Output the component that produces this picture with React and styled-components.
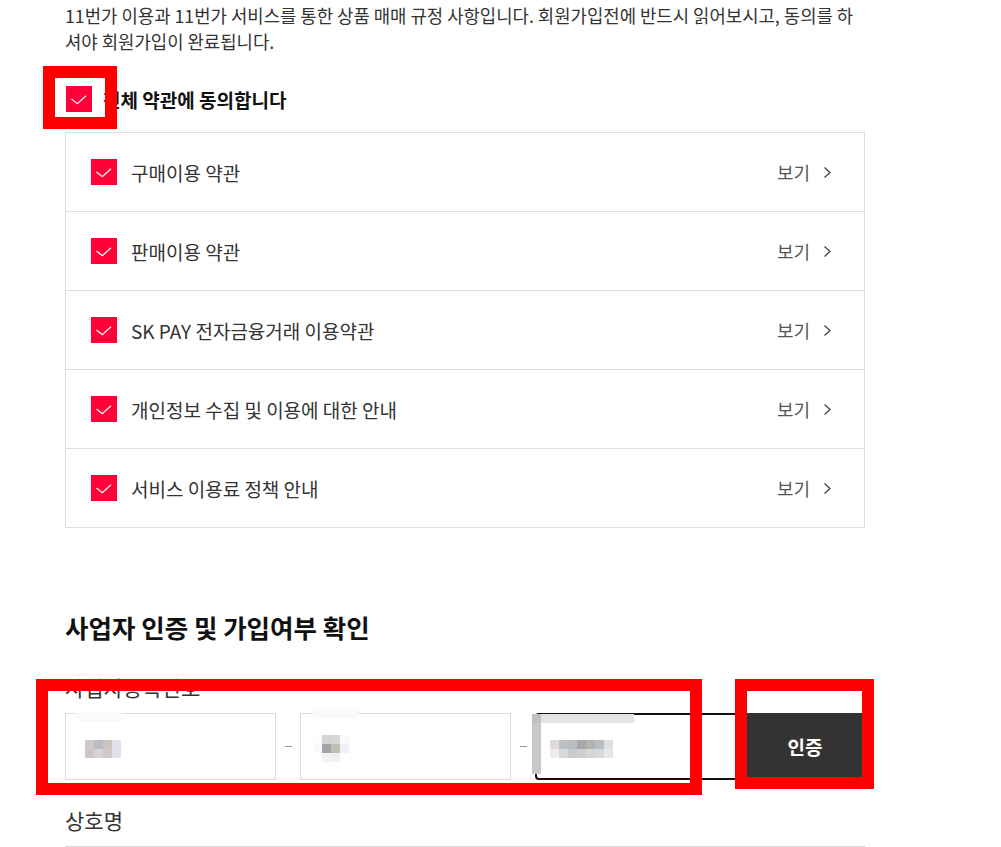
import React from "react";
import styled, { createGlobalStyle } from "styled-components";

const Global = createGlobalStyle`
  html, body { margin: 0; padding: 0; overflow: hidden; background: #fff; }
  body { font-family: "Noto Sans CJK KR", "Noto Sans", sans-serif; color: #333; }
  * { box-sizing: border-box; }
`;

const Page = styled.div`
  position: relative;
  width: 1001px;
  height: 847px;
  overflow: hidden;
  padding: 2px 0 0 65px;
`;

const Content = styled.div`
  width: 800px;
`;

const Intro = styled.p`
  margin: 0;
  font-size: 17.8px;
  line-height: 26px;
  color: #333;
  white-space: nowrap;
`;

const AgreeAll = styled.label`
  display: flex;
  align-items: center;
  gap: 11px;
  margin: 32px 0 0 1px;
  height: 26px;
  font-size: 19px;
  font-weight: 700;
  color: #111;
`;

const Box = styled.span`
  flex: none;
  width: 26px;
  height: 26px;
  background: #ff0038;
  display: inline-flex;
  align-items: center;
  justify-content: center;
`;

const CheckBox = () => (
  <Box>
    <svg width="26" height="26" viewBox="0 0 26 26">
      <polyline points="5.5,13 11.3,17.8 20,9.8" fill="none" stroke="#fff" strokeWidth="1.2" />
    </svg>
  </Box>
);

const TermsList = styled.ul`
  list-style: none;
  margin: 20px 0 0;
  padding: 0;
  border: 1px solid #ddd;
`;

const TermRow = styled.li`
  display: flex;
  align-items: center;
  height: 78px;
  padding: 0 32px 0 25px;
  & + & { border-top: 1px solid #ddd; height: 79px; }
`;

const TermText = styled.span`
  flex: 1;
  margin-left: 14px;
  font-size: 19px;
  color: #333;
`;

const ViewLink = styled.span`
  display: inline-flex;
  align-items: center;
  gap: 13px;
  font-size: 18px;
  color: #555;
`;

const Chevron = () => (
  <svg width="9" height="13" viewBox="0 0 9 13">
    <polyline points="1.5,1.5 7,6.5 1.5,11.5" fill="none" stroke="#444" strokeWidth="1.3" />
  </svg>
);

const SectionTitle = styled.h2`
  margin: 83px 0 0;
  font-size: 25.5px;
  line-height: 32px;
  font-weight: 700;
  color: #111;
`;

const FieldLabel = styled.div`
  margin-top: ${(p) => p.$top}px;
  font-size: 21px;
  line-height: 26px;
  color: #333;
`;

const InputRow = styled.div`
  display: flex;
  align-items: stretch;
  margin-top: 13px;
  height: 67px;
`;

const InputBox = styled.div`
  position: relative;
  flex: none;
  width: ${(p) => p.$w}px;
  height: 67px;
  border: ${(p) => (p.$focused ? "2px solid #111" : "1px solid #ddd")};
  border-radius: ${(p) => (p.$focused ? "4px" : "0")};
  display: flex;
  align-items: center;
  padding-left: ${(p) => p.$pad}px;
  background: #fff;
`;

const Dash = styled.span`
  flex: none;
  width: 24px;
  display: flex;
  align-items: center;
  justify-content: center;
  &::before {
    content: "";
    width: 7px;
    height: 1px;
    background: #999;
  }
`;

const Mosaic = styled.div`
  display: grid;
  grid-template-columns: repeat(${(p) => p.$cols}, 9px);
  grid-auto-rows: 9px;
  margin-top: ${(p) => p.$dy}px;
`;

const Cell = styled.span`
  background: ${(p) => p.$c};
`;

const Smudge = styled.span`
  position: absolute;
  left: ${(p) => p.$x}px;
  top: ${(p) => p.$y}px;
  width: ${(p) => p.$w}px;
  height: ${(p) => p.$h}px;
  background: ${(p) => p.$c};
`;

const AuthButton = styled.button`
  flex: 1;
  border: 0;
  background: #333;
  color: #fff;
  font-family: inherit;
  font-size: 19px;
  font-weight: 700;
  cursor: pointer;
`;

const Underline = styled.div`
  margin-top: 13px;
  height: 67px;
  border: 1px solid #ddd;
`;

const Frame = styled.div`
  position: absolute;
  left: ${(p) => p.$x}px;
  top: ${(p) => p.$y}px;
  width: ${(p) => p.$w}px;
  height: ${(p) => p.$h}px;
  border: 12px solid #ff0000;
  pointer-events: none;
`;

const terms = [
  "구매이용 약관",
  "판매이용 약관",
  "SK PAY 전자금융거래 이용약관",
  "개인정보 수집 및 이용에 대한 안내",
  "서비스 이용료 정책 안내",
];

const mosaic1 = ["#d0c8c5", "#b9bcc0", "#cac5bf", "#dfe2ea", "#cbc6c4", "#d5d3d4", "#d0cac6", "#e1e3ea"];
const mosaic2 = [
  "#fdfcfa", "#d4d4d4", "#d9d7d6", "#f7fafd",
  "#fcfaf8", "#a3a2a6", "#c3bdb8", "#eef1f8",
  "#ffffff", "#f2f2f2", "#f0f0f0", "#ffffff",
];
const mosaic3 = [
  "#e0dad8", "#bcc1c4", "#bcbdc0", "#a8a8aa", "#b8b2ac", "#b7bec4", "#dee1e5",
  "#f1ecea", "#d7d9da", "#cacacc", "#d0cecd", "#d7d5d1", "#d6dadd", "#e6e7e9",
];

export default function App() {
  return (
    <>
      <Global />
      <Page>
        <Content>
          <Intro>
            11번가 이용과 11번가 서비스를 통한 상품 매매 규정 사항입니다. 회원가입전에 반드시 읽어보시고, 동의를 하
            <br />
            셔야 회원가입이 완료됩니다.
          </Intro>
          <AgreeAll>
            <CheckBox />
            전체 약관에 동의합니다
          </AgreeAll>
          <TermsList>
            {terms.map((t) => (
              <TermRow key={t}>
                <CheckBox />
                <TermText>{t}</TermText>
                <ViewLink>
                  보기
                  <Chevron />
                </ViewLink>
              </TermRow>
            ))}
          </TermsList>

          <SectionTitle>사업자 인증 및 가입여부 확인</SectionTitle>
          <FieldLabel $top={31}>사업자등록번호</FieldLabel>
          <InputRow>
            <InputBox $w={211} $pad={19}>
              <Smudge $x={10} $y={-1} $w={45} $h={9} $c="#fafafa" />
              <Mosaic $cols={4} $dy={4}>
                {mosaic1.map((c, i) => <Cell key={i} $c={c} />)}
              </Mosaic>
            </InputBox>
            <Dash />
            <InputBox $w={211} $pad={12}>
              <Smudge $x={12} $y={-5} $w={45} $h={9} $c="#fafafa" />
              <Mosaic $cols={4} $dy={3}>
                {mosaic2.map((c, i) => <Cell key={i} $c={c} />)}
              </Mosaic>
            </InputBox>
            <Dash />
            <InputBox $w={210} $pad={13} $focused>
              <Smudge $x={-5} $y={-1} $w={9} $h={9} $c="#c0c0c0" />
              <Smudge $x={-5} $y={8} $w={9} $h={51} $c="#c8c8c8" />
              <Smudge $x={4} $y={-1} $w={93} $h={9} $c="#e3e3e3" />
              <Mosaic $cols={7} $dy={4}>
                {mosaic3.map((c, i) => <Cell key={i} $c={c} />)}
              </Mosaic>
            </InputBox>
            <AuthButton>인증</AuthButton>
          </InputRow>

          <FieldLabel $top={27}>상호명</FieldLabel>
          <Underline />
        </Content>

        <Frame $x={43} $y={66} $w={74} $h={63} />
        <Frame $x={36} $y={679} $w={666} $h={116} />
        <Frame $x={735} $y={679} $w={139} $h={110} />
      </Page>
    </>
  );
}
